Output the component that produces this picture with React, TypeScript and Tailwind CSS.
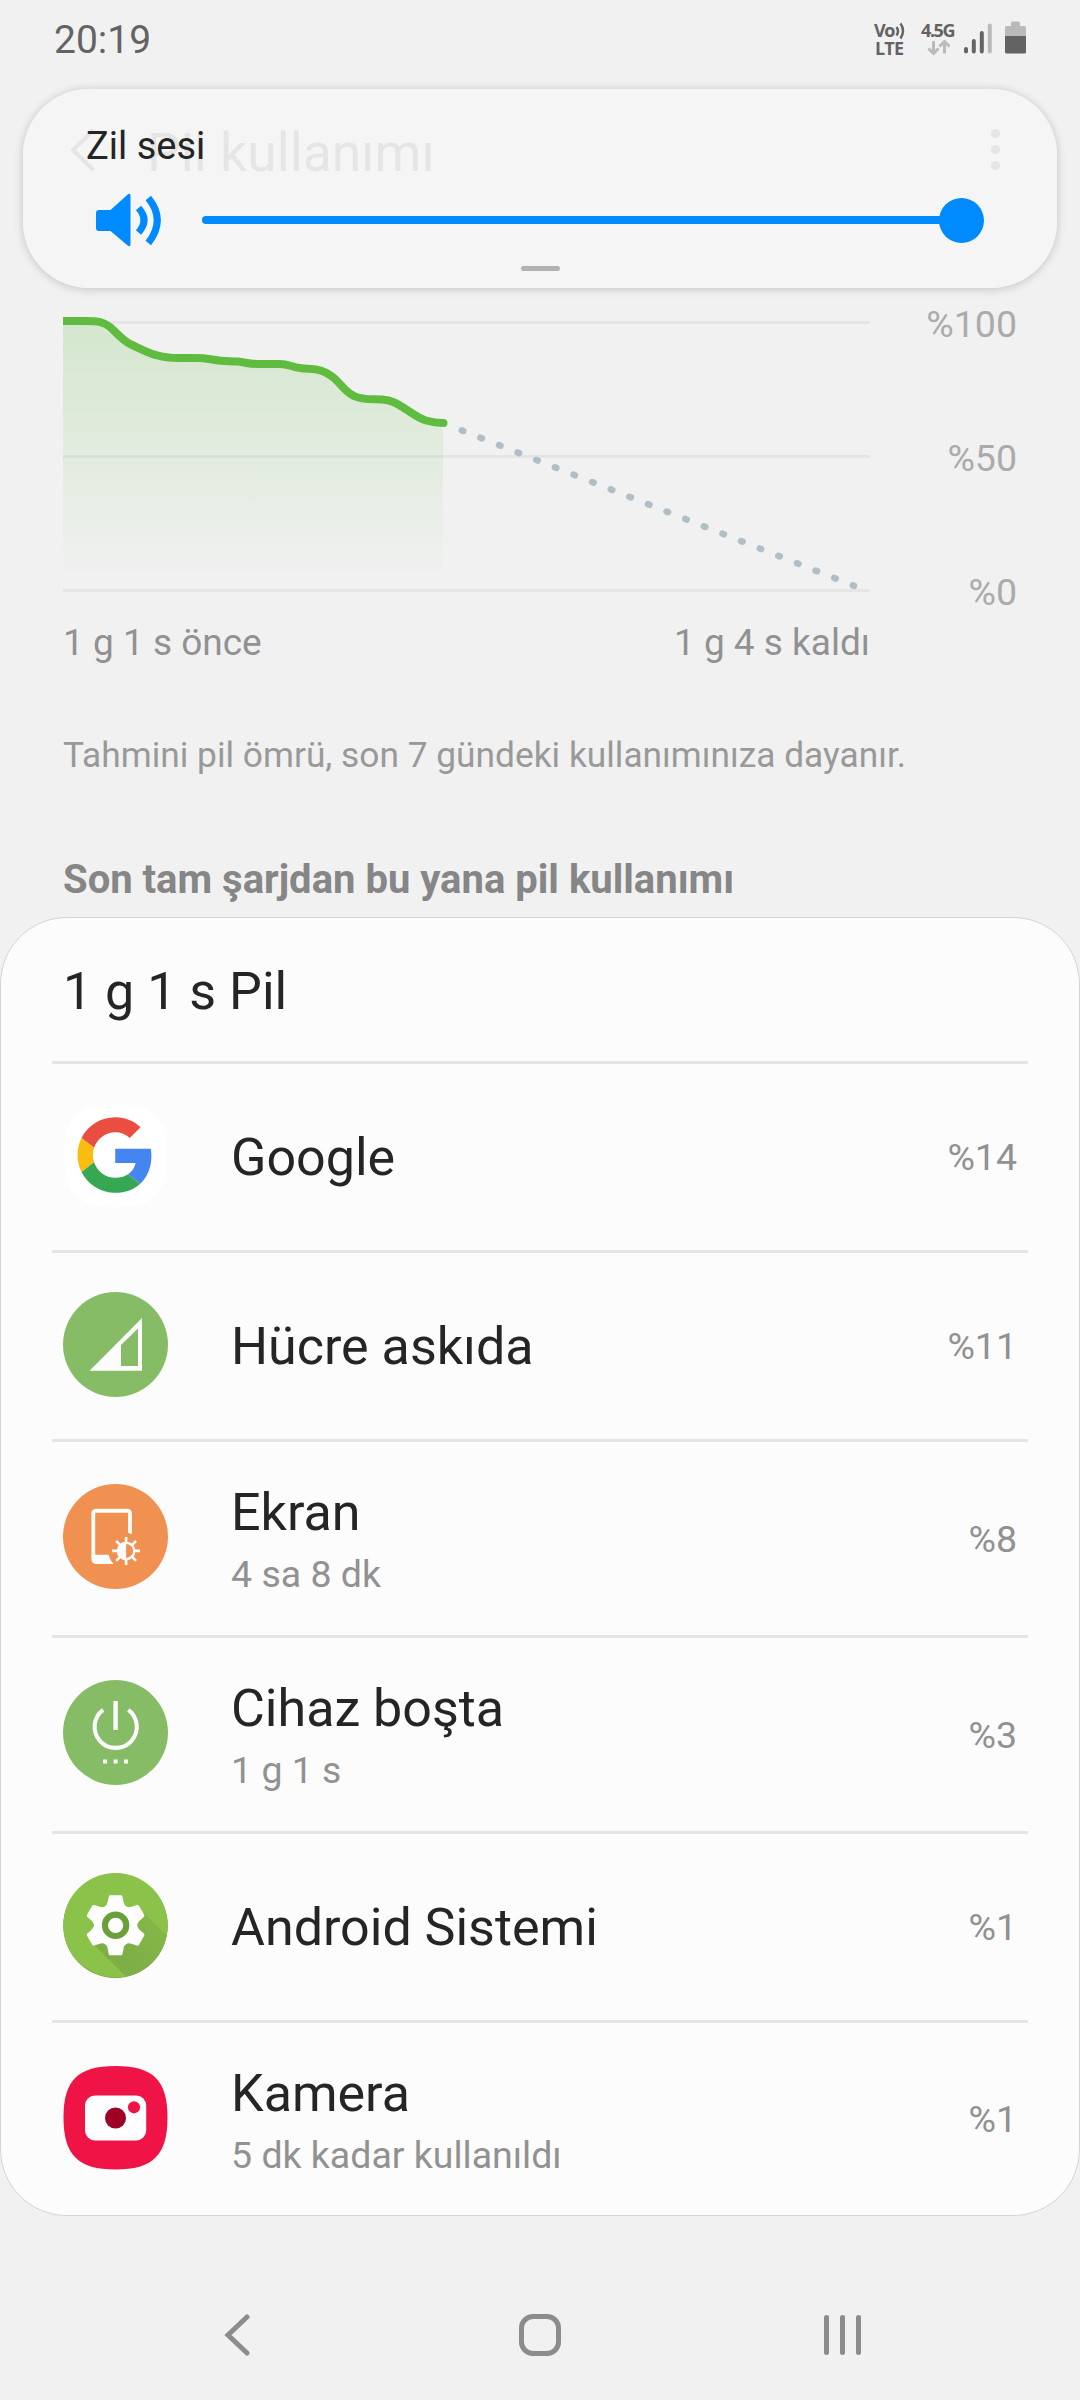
import React from "react";

interface UsageItem {
  name: string;
  detail?: string;
  percent: string;
  icon: React.ReactNode;
}

const GoogleIcon: React.FC = () => (
  <svg viewBox="0 0 105 105" className="w-[105px] h-[105px]">
    <path d="M52.5 1C90 1 104 15 104 52.5S90 104 52.5 104 1 90 1 52.5 15 1 52.5 1Z" fill="#fff" />
    <g transform="translate(14.5 14.3) scale(1.573)">
      <path fill="#EA4E40" d="M24 9.5c3.54 0 6.71 1.22 9.21 3.6l6.85-6.85C35.9 2.38 30.47 0 24 0 14.62 0 6.51 5.38 2.56 13.22l7.98 6.19C12.43 13.72 17.74 9.5 24 9.5z" />
      <path fill="#4585F2" d="M46.98 24.55c0-1.57-.15-3.09-.38-4.55H24v9.02h12.94c-.58 2.96-2.26 5.48-4.78 7.18l7.73 6c4.51-4.18 7.09-10.36 7.09-17.65z" />
      <path fill="#FABC0F" d="M10.53 28.59c-.48-1.45-.76-2.99-.76-4.59s.27-3.14.76-4.59l-7.98-6.19C.92 16.46 0 20.12 0 24c0 3.88.92 7.54 2.56 10.78l7.97-6.19z" />
      <path fill="#36A853" d="M24 48c6.48 0 11.93-2.13 15.89-5.81l-7.73-6c-2.15 1.45-4.92 2.3-8.16 2.3-6.26 0-11.57-4.22-13.47-9.91l-7.98 6.19C6.51 42.62 14.62 48 24 48z" />
    </g>
  </svg>
);

const CellIcon: React.FC = () => (
  <svg viewBox="0 0 105 105" className="w-[105px] h-[105px]">
    <circle cx="52.5" cy="52.5" r="52.5" fill="#87BC67" />
    <path d="M26.6 78.7L79 26V78.7ZM58 53V74H75V36.5Z" fill="#fcfcfc" fillRule="evenodd" />
  </svg>
);

const ScreenIcon: React.FC = () => (
  <svg viewBox="0 0 105 105" className="w-[105px] h-[105px]">
    <circle cx="52.5" cy="52.5" r="52.5" fill="#F09152" />
    <path
      d="M50.6 80H33a4.6 4.6 0 0 1-4.6-4.6V29.3a4.6 4.6 0 0 1 4.6-4.6h31.4a4.6 4.6 0 0 1 4.6 4.6V50l-3.9-1V28.8H32.2V70.7H45.6a20 20 0 0 0 5 9.3Z"
      fill="#fcfcfc"
    />
    <circle cx="63.1" cy="66.9" r="8.2" fill="none" stroke="#fcfcfc" strokeWidth="2.4" />
    <path d="M63.1 58.7a8.2 8.2 0 0 0 0 16.4Z" fill="#fcfcfc" />
    <g stroke="#fcfcfc" strokeWidth="2.6">
      <path d="M63.1 53v5M63.1 76v5M49.1 66.9h5M72.1 66.9h5M53.2 57l3.6 3.6M69.4 73.2l3.6 3.6M73 57l-3.6 3.6M56.8 73.2l-3.6 3.6" />
    </g>
  </svg>
);

const IdleIcon: React.FC = () => (
  <svg viewBox="0 0 105 105" className="w-[105px] h-[105px]">
    <circle cx="52.5" cy="52.5" r="52.5" fill="#87BC67" />
    <path d="M40.1 29.9A21.1 21.1 0 1 0 65.3 29.9" fill="none" stroke="#fcfcfc" strokeWidth="4.1" />
    <path d="M52.6 21V50" stroke="#fcfcfc" strokeWidth="4.4" />
    <path d="M40 79.6h4.1v3.8H40zM50.6 79.6h4v3.8h-4zM61 79.6h4v3.8h-4z" fill="#fcfcfc" />
  </svg>
);

const SystemIcon: React.FC = () => (
  <svg viewBox="0 0 105 105" className="w-[105px] h-[105px]">
    <defs>
      <linearGradient id="gearShadow" gradientUnits="userSpaceOnUse" x1="62" y1="85" x2="90" y2="57">
        <stop offset="0" stopColor="#7EAF47" />
        <stop offset="1" stopColor="#84B548" />
      </linearGradient>
      <clipPath id="gearClip">
        <circle cx="52.5" cy="52.3" r="52" />
      </clipPath>
    </defs>
    <circle cx="52.5" cy="52.8" r="52.2" fill="#6E9B3B" />
    <circle cx="52.5" cy="52.2" r="52.2" fill="#8BC34A" />
    <path d="M80 39L130 89V171L29 70Z" fill="url(#gearShadow)" clipPath="url(#gearClip)" />
    <g fill="#fff" transform="translate(52.6 52.3)">
      <circle r="21.5" />
      {[0, 60, 120, 180, 240, 300].map((angle) => (
        <path
          key={angle}
          transform={`rotate(${angle})`}
          d="M-11.5-18Q-8.5-20-8-23L-6.9-28.6Q-6.6-30-5.2-30H5.2Q6.6-30 6.9-28.6L8-23Q8.5-20 11.5-18Z"
        />
      ))}
      <circle r="10.7" fill="#fff" stroke="#6AA03A" strokeWidth="6.1" />
    </g>
  </svg>
);

const CameraIcon: React.FC = () => (
  <svg viewBox="0 0 105 105" className="w-[105px] h-[105px]">
    <path d="M52.5 1C90 1 104.5 15 104.5 52.5S90 104.5 52.5 104.5.5 90 .5 52.5 15 1 52.5 1Z" fill="#F01446" />
    <rect x="22" y="30.5" width="61.2" height="45" rx="10" fill="#fff" />
    <circle cx="52.5" cy="53" r="10.5" fill="#A00026" />
    <circle cx="71" cy="42.3" r="6.1" fill="#F01446" />
  </svg>
);

const items: UsageItem[] = [
  { name: "Google", percent: "%14", icon: <GoogleIcon /> },
  { name: "Hücre askıda", percent: "%11", icon: <CellIcon /> },
  { name: "Ekran", detail: "4 sa 8 dk", percent: "%8", icon: <ScreenIcon /> },
  { name: "Cihaz boşta", detail: "1 g 1 s", percent: "%3", icon: <IdleIcon /> },
  { name: "Android Sistemi", percent: "%1", icon: <SystemIcon /> },
  { name: "Kamera", detail: "5 dk kadar kullanıldı", percent: "%1", icon: <CameraIcon /> },
];

const StatusBar: React.FC = () => (
  <div className="flex h-[80px] items-start justify-between pl-[54px] pr-[54px] text-[#636363]">
    <span className="mt-[17px] text-[39px] leading-[46px]">20:19</span>
    <div className="mt-[20px] flex items-start">
      {/* VoLTE */}
      <div className="relative w-[33px] font-['Open_Sans',sans-serif] text-[18px] font-bold leading-[18px]">
        <div className="mt-px tracking-[-1.5px]">Vo</div>
        <div className="pl-[1px] tracking-[-0.8px]">LTE</div>
        <svg viewBox="0 0 12 18" className="absolute left-[21px] top-[2px] h-[18px] w-[12px]">
          <path d="M1.500 5q3 4 0 8.500M5.500 1.500q5 7 0 15" fill="none" stroke="#636363" strokeWidth="2.4" />
        </svg>
      </div>
      <div className="ml-[14px] w-[36px]">
        <div className="mt-px font-['Open_Sans',sans-serif] text-[18px] font-bold leading-[18px] tracking-[-1.4px]">4.5G</div>
        <svg viewBox="0 0 24 16" className="ml-[6px] mt-[1px] h-[16px] w-[24px]">
          <path d="M6.5 1v12M1.5 8.5l5 5 5-5M17.500 13.500v-12M12.500 6.500l5-5 5 5" fill="none" stroke="#BABABA" strokeWidth="3" />
        </svg>
      </div>
      <svg viewBox="0 0 28 32" className="ml-[7px] mt-[2px] h-[32px] w-[28px]">
        <g strokeWidth="4" strokeLinecap="round" stroke="#636363">
          <path d="M2 27v2.500M9.800 19v10.500M17.800 11v18.500" />
          <path d="M25.800 3.500v26" stroke="#BABABA" />
        </g>
      </svg>
      <svg viewBox="0 0 21 33" className="ml-[13px] mt-[1px] h-[33px] w-[21px]">
        <path d="M6 2q0-1.500 1.500-1.500h6q1.500 0 1.500 1.500v3h4.500q1.500 0 1.500 1.500v9h-21v-9q0-1.500 1.500-1.500h4.500z" fill="#BABABA" />
        <path d="M0 15h21v16q0 1.500-1.500 1.500h-18q-1.500 0-1.500-1.500z" fill="#636363" />
      </svg>
    </div>
  </div>
);

const AppBar: React.FC = () => (
  <div className="flex h-[137px] items-start text-[#252525]">
    <svg viewBox="0 0 26 44" className="ml-[70px] mt-[48px] h-[44px] w-[26px]">
      <path d="M23.500 2L3 22L23.500 42" fill="none" stroke="currentColor" strokeWidth="4" />
    </svg>
    <h1 className="ml-[51px] mt-[42px] text-[53.5px] leading-[62px]">Pil kullanımı</h1>
    <div className="ml-auto mr-[80px] mt-[49px] flex flex-col gap-[7px]">
      <span className="h-[9px] w-[9px] rounded-full bg-current" />
      <span className="h-[9px] w-[9px] rounded-full bg-current" />
      <span className="h-[9px] w-[9px] rounded-full bg-current" />
    </div>
  </div>
);

/* Volume popup floating over the app bar */
const VolumePanel: React.FC = () => (
  <div className="absolute left-[23px] top-[89px] flex h-[199px] w-[1034px] flex-col rounded-[66px] bg-[#f5f5f5]/92 shadow-[0_1px_10px_rgba(0,0,0,0.2)]">
    <span className="ml-[63px] mt-[34px] text-[38px] leading-[46px] text-[#252525]">Zil sesi</span>
    <div className="mt-[23px] flex h-[56px] items-center">
      <svg viewBox="0 0 66 54" className="ml-[73px] h-[54px] w-[66px]">
        <path d="M3 17h11.500L32 1.300Q34.500 0 34.500 2.500V51.500Q34.500 54 32 52.700L14.500 38H3q-3 0-3-3V20q0-3 3-3Z" fill="#008AFF" />
        <path d="M42.500 15q11 12 0 24.500M52.300 5q18 22 0 45" fill="none" stroke="#008AFF" strokeWidth="7" />
      </svg>
      <div className="ml-[40px] flex w-[782px] items-center">
        <div className="h-[8px] flex-1 rounded-l-full bg-[#008AFF]" />
        <div className="-ml-px h-[45px] w-[45px] rounded-full bg-[#008AFF]" />
      </div>
    </div>
    <div className="mx-auto mt-[18px] h-[5px] w-[39px] rounded-full bg-[#b2b2b2]" />
  </div>
);

const BatteryChart: React.FC = () => (
  <div className="flex h-[303px] justify-between pl-[63px] pr-[63px]">
    <svg viewBox="63 300 807 303" className="h-[303px] w-[807px]">
      <defs>
        <linearGradient id="batteryFill" gradientUnits="userSpaceOnUse" x1="0" y1="321" x2="0" y2="584">
          <stop offset="0" stopColor="#5FBC3E" stopOpacity="0.2" />
          <stop offset="1" stopColor="#5FBC3E" stopOpacity="0" />
        </linearGradient>
      </defs>
      <path d="M63 322.500H870M63 456.500H870M63 590.500H870" stroke="#e5e5e5" strokeWidth="3" />
      <path
        d="M63 325Q64 321 68 321H86C98 321 104 322 110 327C117 333 122 340 130 344C139 348 148 353 156 355C164 357.500 170 358 179 358H198C206 358 212 360 221 360.700C228 361.300 232 361 238 361.600C246 362.500 249 364 258 364H280C288 364 292 367 300 368C306 369 311 368.500 317 369.600C324 371 328 373 334 378C341 384 345 392 354 396C362 400 370 399 382 399.600C392 400.500 396 403 404 408C412 413 418 418 426 420.500C433 422.500 438 423 442 424L443 435V584H63Z"
        fill="url(#batteryFill)"
      />
      <path
        d="M59 321H86C98 321 104 322 110 327C117 333 122 340 130 344C139 348 148 353 156 355C164 357.500 170 358 179 358H198C206 358 212 360 221 360.700C228 361.300 232 361 238 361.600C246 362.500 249 364 258 364H280C288 364 292 367 300 368C306 369 311 368.500 317 369.600C324 371 328 373 334 378C341 384 345 392 354 396C362 400 370 399 382 399.600C392 400.500 396 403 404 408C412 413 418 418 426 420.500C433 422.500 438 423 443.500 423"
        fill="none"
        stroke="#5FBC3E"
        strokeWidth="8"
        strokeLinecap="round"
      />
      <path d="M461.800 430.400L854 585.800" stroke="#B0BEC5" strokeWidth="6.600" strokeLinecap="round" strokeDasharray="1.500 18.530" />
    </svg>
    <div className="mt-[2px] flex flex-col gap-[90px] text-right text-[37.5px] leading-[44px] text-[#ababab]">
      <span>%100</span>
      <span>%50</span>
      <span>%0</span>
    </div>
  </div>
);

const UsageRow: React.FC<{ item: UsageItem }> = ({ item }) => (
  <li
    className={`mx-[51px] flex items-center border-t-[3px] border-[#e5e5e5] pl-[11px] pr-[11px] last:h-[195px] ${item.detail ? "h-[196px]" : "h-[189px]"}`}
  >
    <div className="mb-[4px] shrink-0">{item.icon}</div>
    <div className="ml-[63px] mt-[2px] flex flex-1 flex-col">
      <span className="text-[52px] leading-[60px] text-[#252525]">{item.name}</span>
      {item.detail && <span className="mt-[9px] text-[37.5px] leading-[44px] text-[#919191]">{item.detail}</span>}
    </div>
    <span className="text-[37.5px] leading-[44px] text-[#919191]">{item.percent}</span>
  </li>
);

const NavBar: React.FC = () => (
  <div className="mt-[97px] flex h-[44px] items-center text-[#8c8c8c]">
    <svg viewBox="0 0 26 44" className="ml-[224px] h-[44px] w-[26px]">
      <path d="M23 4L4 22L23 40" fill="none" stroke="currentColor" strokeWidth="5" strokeLinecap="round" />
    </svg>
    <div className="ml-[269px] h-[42px] w-[42px] rounded-[14px] border-[5px] border-current" />
    <div className="ml-[263px] flex gap-[11px]">
      <span className="h-[40px] w-[5px] rounded-full bg-current" />
      <span className="h-[40px] w-[5px] rounded-full bg-current" />
      <span className="h-[40px] w-[5px] rounded-full bg-current" />
    </div>
  </div>
);

const App: React.FC = () => {
  return (
    <div className="relative h-[2400px] w-[1080px] overflow-hidden bg-[#f1f1f1] font-['Roboto',sans-serif]">
      <StatusBar />
      <AppBar />
      <div className="pt-[83px]">
        <BatteryChart />
      </div>
      <div className="mt-[18px] flex justify-between pl-[63px] pr-[210px] text-[37px] leading-[44px] text-[#919191]">
        <span>1 g 1 s önce</span>
        <span>1 g 4 s kaldı</span>
      </div>
      <p className="ml-[63px] mt-[70px] text-[35.3px] leading-[40px] text-[#999999]">
        Tahmini pil ömrü, son 7 gündeki kullanımınıza dayanır.
      </p>
      <h2 className="ml-[63px] mt-[82px] text-[40px] font-bold leading-[46px] text-[#868686]">
        Son tam şarjdan bu yana pil kullanımı
      </h2>

      <section className="mt-[14px] rounded-[67px] border border-[#d4d4d4] bg-[#fcfcfc]">
        <div className="h-[143px] pl-[62px] pt-[44px] text-[52px] leading-[60px] text-[#252525]">1 g 1 s Pil</div>
        <ul>
          {items.map((item) => (
            <UsageRow key={item.name} item={item} />
          ))}
        </ul>
      </section>

      <NavBar />
      <VolumePanel />
    </div>
  );
};

export default App;
